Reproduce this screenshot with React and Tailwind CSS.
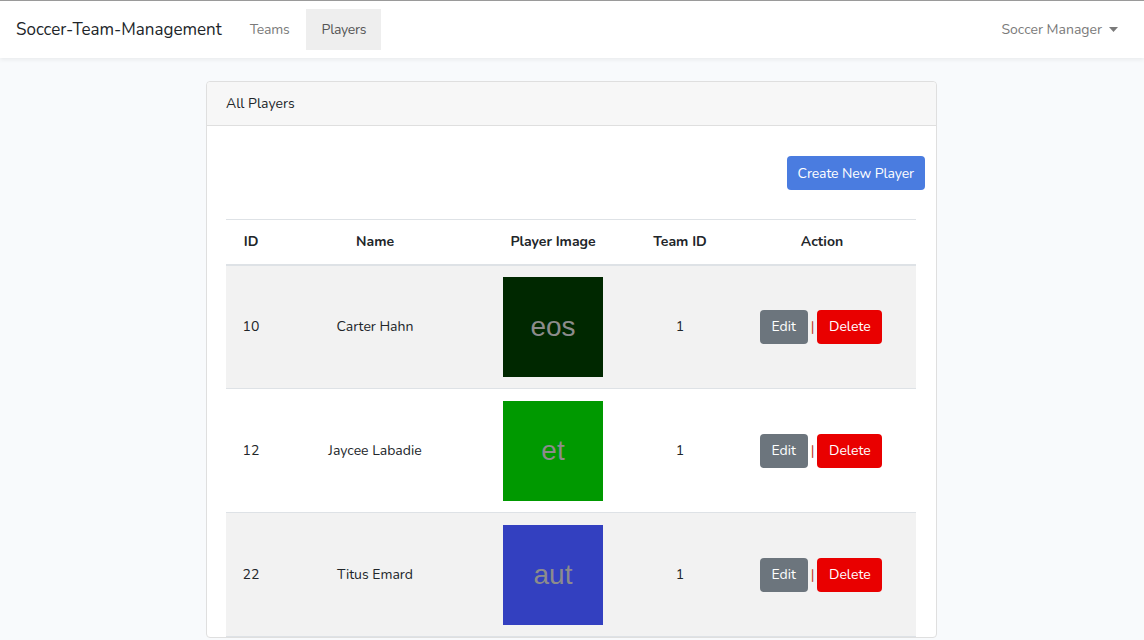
const players = [
  { id: 10, name: "Carter Hahn", word: "eos", color: "bg-[#002800]", team: 1, striped: true },
  { id: 12, name: "Jaycee Labadie", word: "et", color: "bg-[#009900]", team: 1, striped: false },
  { id: 22, name: "Titus Emard", word: "aut", color: "bg-[#3340c0]", team: 1, striped: true },
];

export default function App() {
  return (
    <div className="min-h-screen bg-[#f8fafc] text-[14px] text-[#212529] font-['Nunito','Lato','Noto_Sans',sans-serif]">
      {/* Navbar */}
      <nav className="h-[58px] bg-white border-t border-[#9a9a9a] shadow-[0_2px_4px_rgba(0,0,0,0.06)] flex items-center pl-4 pr-[26px]">
        <span className="text-[17px] text-[#212529] mr-[12px]">Soccer-Team-Management</span>
        <a className="px-4 py-[10px] text-[#7a7a7a] tracking-[-0.2px]">Teams</a>
        <a className="pl-4 pr-[15px] h-[41px] flex items-center bg-[#eeeeee] text-[#555555] tracking-[-0.3px]">Players</a>
        <div className="ml-auto flex items-center gap-[7px] text-[#7a7a7a]">
          <span>Soccer Manager</span>
          <svg width="9" height="5" viewBox="0 0 9 5">
            <path d="M0 0h9L4.5 5z" fill="#7a7a7a" />
          </svg>
        </div>
      </nav>

      {/* Card */}
      <div className="pt-[23px] flex justify-center">
        <div className="w-[731px] -ml-[1px] bg-white border border-[#dfdfdf] rounded-[4px]">
          <div className="h-[44px] bg-[#f7f7f7] border-b border-[#dfdfdf] flex items-center px-[19px] rounded-t-[4px]">
            All Players
          </div>
          <div className="px-[19px] pt-[30px]">
            <div className="flex justify-end -mr-[8px]">
              <button className="h-[34px] px-[11px] bg-[#4a7ce0] text-white rounded-[4px] tracking-[-0.1px]">Create New Player</button>
            </div>
            <table className="w-[690px] mt-[29px] border-t border-[#dee2e6] table-fixed">
              <thead>
                <tr className="h-[45px] border-b-2 border-[#dee2e6] font-bold">
                  <th className="w-[50px]">ID</th>
                  <th className="w-[198px]">Name</th>
                  <th className="w-[158px]">Player Image</th>
                  <th className="w-[96px]">Team ID</th>
                  <th className="w-[188px]">Action</th>
                </tr>
              </thead>
              <tbody>
                {players.map((p) => (
                  <tr key={p.id} className={`h-[124px] border-b border-[#dee2e6] text-center ${p.striped ? "bg-[#f2f2f2]" : ""}`}>
                    <td>{p.id}</td>
                    <td>{p.name}</td>
                    <td>
                      <div className={`w-[100px] h-[100px] mx-auto flex items-center justify-center ${p.color}`}>
                        <span className="text-[28px] text-[#8c8c8c] font-['Liberation_Sans',Arial,sans-serif]">{p.word}</span>
                      </div>
                    </td>
                    <td>{p.team}</td>
                    <td>
                      <div className="flex items-center justify-center gap-[3px] -ml-[2px]">
                        <button className="h-[34px] w-[48px] bg-[#6c757d] text-white rounded-[4px]">Edit</button>
                        <span className="text-[#c0392b]">|</span>
                        <button className="h-[34px] w-[65px] bg-[#e90000] text-white rounded-[4px]">Delete</button>
                      </div>
                    </td>
                  </tr>
                ))}
              </tbody>
            </table>
          </div>
        </div>
      </div>
    </div>
  );
}
